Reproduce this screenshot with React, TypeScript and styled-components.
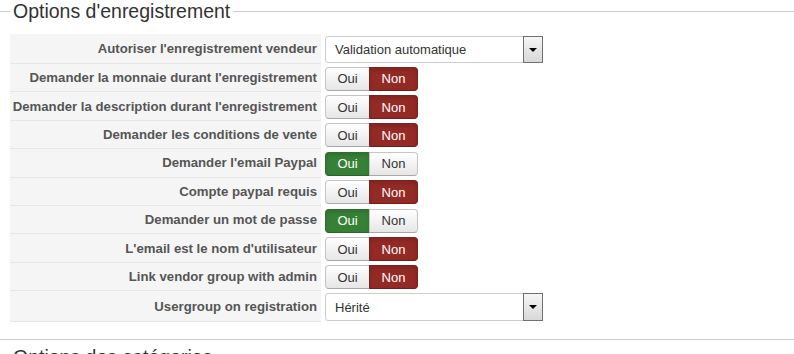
import styled, { createGlobalStyle } from 'styled-components';

const GlobalStyle = createGlobalStyle`
  html, body {
    margin: 0;
    padding: 0;
    background: #fff;
    overflow: hidden;
  }
  body {
    font-family: "Liberation Sans", Arial, sans-serif;
    font-size: 13px;
    color: #333;
  }
`;

const Fieldset = styled.fieldset`
  margin: 0;
  padding: 0 10px 17px;
  border: 0;
  border-top: 1px solid #ccc;
  border-bottom: 1px solid #ccc;
  min-width: 0;
`;

const NextFieldset = styled(Fieldset)`
  margin-top: 6px;
  border-top: 0;
  border-bottom: 0;
`;

const Legend = styled.legend`
  padding: 0 3px;
  font-size: 19.5px;
  line-height: 23px;
  color: #333;
`;

const Table = styled.div`
  display: flex;
  flex-direction: column;
  margin-top: 11px;
`;

const Row = styled.div`
  display: flex;
  align-items: stretch;
  min-height: 28.4px;
`;

const Label = styled.div`
  width: 311px;
  flex: 0 0 311px;
  box-sizing: border-box;
  padding-right: 4px;
  display: flex;
  align-items: center;
  justify-content: flex-end;
  background: #f5f5f5;
  border-bottom: 1px solid #e6e6e6;
  font-weight: bold;
  font-size: 13.2px;
  color: #555;
  white-space: nowrap;
`;

const Control = styled.div`
  display: flex;
  align-items: center;
  padding: 2px 0 1px 4px;
`;

const Select = styled.div<{ $tall?: boolean }>`
  display: flex;
  align-items: stretch;
  width: 218px;
  height: ${(p) => (p.$tall ? 28 : 27)}px;
  box-sizing: border-box;
  border: 1px solid #ccc;
  border-radius: 3px;
  background: #fff;
`;

const SelectText = styled.span`
  flex: 1;
  display: flex;
  align-items: center;
  padding-left: 9px;
  color: #333;
`;

const Arrow = styled.span`
  width: 20px;
  margin: -1px -1px -1px 0;
  box-sizing: border-box;
  border: 1px solid #707070;
  background: linear-gradient(#f6f6f6, #d8d8d8);
  display: flex;
  align-items: center;
  justify-content: center;

  &::after {
    content: '';
    border-left: 4px solid transparent;
    border-right: 4px solid transparent;
    border-top: 4px solid #000;
  }
`;

const Toggle = styled.div`
  display: flex;
  height: 24px;
`;

const ToggleButton = styled.span<{ $on: boolean; $tone: 'yes' | 'no'; $side: 'left' | 'right' }>`
  width: ${(p) => (p.$side === 'left' ? 45 : 49)}px;
  box-sizing: border-box;
  display: flex;
  align-items: center;
  justify-content: center;
  font-size: 13px;
  border: 1px solid ${(p) => (p.$on ? (p.$tone === 'yes' ? '#2e6e2e' : '#7d231f') : '#c5c5c5')};
  border-bottom-color: ${(p) => (p.$on ? (p.$tone === 'yes' ? '#2a632a' : '#6e1f1b') : '#a8a8a8')};
  ${(p) => (p.$side === 'left' ? 'border-radius: 4px 0 0 4px;' : 'border-radius: 0 4px 4px 0; margin-left: -1px;')}
  color: ${(p) => (p.$on ? '#fff' : '#333')};
  background: ${(p) =>
    p.$on
      ? p.$tone === 'yes'
        ? '#378137'
        : '#942a25'
      : 'linear-gradient(#ffffff, #e6e6e6)'};
  box-shadow: ${(p) => (p.$on ? 'inset 0 2px 4px rgba(0,0,0,0.15)' : 'inset 0 1px 0 rgba(255,255,255,0.2)')};
`;

type Item =
  | { label: string; kind: 'select'; value: string; tall?: boolean }
  | { label: string; kind: 'toggle'; yes: boolean };

const items: Item[] = [
  { label: "Autoriser l'enregistrement vendeur", kind: 'select', value: 'Validation automatique' },
  { label: "Demander la monnaie durant l'enregistrement", kind: 'toggle', yes: false },
  { label: "Demander la description durant l'enregistrement", kind: 'toggle', yes: false },
  { label: 'Demander les conditions de vente', kind: 'toggle', yes: false },
  { label: "Demander l'email Paypal", kind: 'toggle', yes: true },
  { label: 'Compte paypal requis', kind: 'toggle', yes: false },
  { label: 'Demander un mot de passe', kind: 'toggle', yes: true },
  { label: "L'email est le nom d'utilisateur", kind: 'toggle', yes: false },
  { label: 'Link vendor group with admin', kind: 'toggle', yes: false },
  { label: 'Usergroup on registration', kind: 'select', value: 'Hérité', tall: true },
];

const YesNo = ({ yes }: { yes: boolean }) => (
  <Toggle>
    <ToggleButton $on={yes} $tone="yes" $side="left">Oui</ToggleButton>
    <ToggleButton $on={!yes} $tone="no" $side="right">Non</ToggleButton>
  </Toggle>
);

const App = () => {
  return (
    <>
      <GlobalStyle />
      <Fieldset>
        <Legend>Options d'enregistrement</Legend>
        <Table>
          {items.map((item) => (
            <Row key={item.label}>
              <Label>{item.label}</Label>
              <Control>
                {item.kind === 'select' ? (
                  <Select $tall={item.tall}>
                    <SelectText>{item.value}</SelectText>
                    <Arrow />
                  </Select>
                ) : (
                  <YesNo yes={item.yes} />
                )}
              </Control>
            </Row>
          ))}
        </Table>
      </Fieldset>
      <NextFieldset>
        <Legend>Options des catégories</Legend>
      </NextFieldset>
    </>
  );
};

export default App;
